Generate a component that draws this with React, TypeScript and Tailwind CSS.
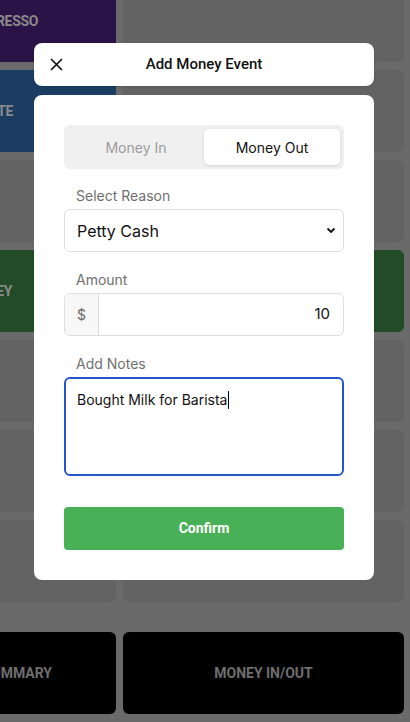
import React from 'react';

const tile = 'h-[82px] rounded-md bg-[#636363]';

// left column sits partly off-screen, so its labels are clipped by the page edge
const LeftTile = ({ color, label, pad }: { color: string; label?: string; pad?: string }) => (
  <div className={`h-[82px] rounded-md flex items-center justify-end overflow-hidden ${color} ${pad ?? ''}`}>
    {label && <span className="whitespace-nowrap text-[14px] font-bold text-[#8a8a8a] tracking-tight">{label}</span>}
  </div>
);

const App = () => {
  return (
    <div
      className="relative w-[410px] h-[722px] overflow-hidden bg-[#6a6a6a]"
      style={{ fontFamily: 'Roboto, "Liberation Sans", sans-serif' }}
    >
      <div className="mt-[-20px] ml-[-165px] grid grid-cols-[281px_281px] gap-x-[7px] gap-y-2">
        <LeftTile color="bg-[#2a1346]" label="ESPRESSO" pad="pr-[78px]" />
        <div className={tile} />
        <LeftTile color="bg-[#1b3d63]" label="LATTE" pad="pr-[103px]" />
        <div className={tile} />
        <LeftTile color="bg-[#636363]" />
        <div className={tile} />
        <LeftTile color="bg-[#224b27]" label="MONEY" pad="pr-[104px]" />
        <div className="h-[82px] rounded-md bg-[#224b27]" />
        <LeftTile color="bg-[#636363]" />
        <div className={tile} />
        <LeftTile color="bg-[#636363]" />
        <div className={tile} />
        <LeftTile color="bg-[#636363]" />
        <div className={tile} />
      </div>
      <div className="mt-[30px] ml-[-165px] grid grid-cols-[281px_281px] gap-x-[7px]">
        <div className="h-[82px] rounded-md bg-black flex items-center justify-end pr-[64px]">
          <span className="whitespace-nowrap text-[14px] font-bold text-[#6e6e6e]">SUMMARY</span>
        </div>
        <div className="h-[82px] rounded-md bg-black flex items-center justify-center">
          <span className="text-[14px] font-bold text-[#6e6e6e]">MONEY IN/OUT</span>
        </div>
      </div>

      <div className="absolute left-[34px] top-[43px] w-[340px] flex flex-col gap-[9px]">
        <div className="relative h-[43px] rounded-lg bg-white flex items-center justify-center shadow-sm">
          <svg className="absolute left-[16px] top-[15px]" width="13" height="13" viewBox="0 0 13 13">
            <path d="M1.5 1.5 L11.5 11.5 M11.5 1.5 L1.5 11.5" stroke="#111" strokeWidth="1.7" strokeLinecap="round" />
          </svg>
          <span className="text-[15px] font-medium text-[#111]">Add Money Event</span>
        </div>

        <div
          className="h-[485px] rounded-lg bg-white px-[30px] pt-[30px] flex flex-col"
          style={{ fontFamily: 'Inter, "Liberation Sans", sans-serif' }}
        >
          <div className="h-[44px] rounded-md bg-[#f0f0f0] p-1 grid grid-cols-2">
            <div className="flex items-center justify-center text-[14px] text-[#9c9c9c]">Money In</div>
            <div className="rounded-[5px] bg-white shadow-[0_1px_3px_rgba(0,0,0,0.12)] flex items-center justify-center text-[14px] text-[#111]">
              Money Out
            </div>
          </div>

          <label className="mt-[17px] mb-[3px] h-5 pl-3 text-[14px] leading-5 text-[#6f6f6f]">Select Reason</label>
          <div className="h-[43px] rounded-md border border-[#dedede] flex items-center justify-between pl-3 pr-[7px]">
            <span className="text-[16px] text-[#111]">Petty Cash</span>
            <svg width="10" height="7" viewBox="0 0 10 7">
              <path d="M1.5 1.5 L5 5 L8.5 1.5" fill="none" stroke="#111" strokeWidth="1.8" />
            </svg>
          </div>

          <label className="mt-[18px] mb-[3px] h-5 pl-3 text-[14px] leading-5 text-[#6f6f6f]">Amount</label>
          <div className="h-[43px] rounded-md border border-[#dedede] flex overflow-hidden">
            <div className="w-[34px] bg-[#f7f7f7] border-r border-[#dedede] flex items-center justify-center text-[14px] text-[#666]">
              $
            </div>
            <div className="flex-1 flex items-center justify-end pr-[13px] text-[15px] text-[#111]">10</div>
          </div>

          <label className="mt-[18px] mb-[3px] h-5 pl-3 text-[14px] leading-5 text-[#6f6f6f]">Add Notes</label>
          <div className="h-[99px] rounded-md border-2 border-[#2357c9] px-[11px] pt-[11px]">
            <div className="flex items-center text-[14px] leading-5 text-[#111]">
              Bought Milk for Barista
              <span className="ml-px inline-block w-px h-[18px] bg-black" />
            </div>
          </div>

          <button
            className="mt-[31px] h-[43px] rounded bg-[#48b056] text-white text-[14px] font-bold"
            style={{ fontFamily: 'Roboto, "Liberation Sans", sans-serif' }}
          >
            Confirm
          </button>
        </div>
      </div>
    </div>
  );
};

export default App;
